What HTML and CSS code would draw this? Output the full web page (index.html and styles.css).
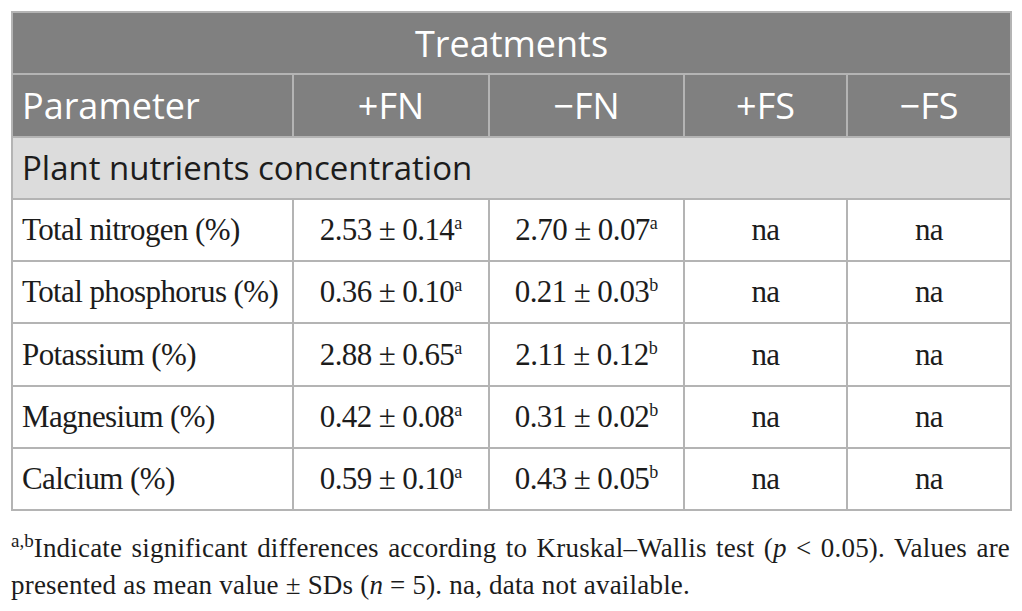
FILE: index.html
```html
<!DOCTYPE html>
<html>
<head>
<meta charset="utf-8">
<link rel="stylesheet" href="styles.css">
</head>
<body>
<div class="page">
<table class="data">
  <colgroup>
    <col class="c1"><col class="c2"><col class="c3"><col class="c4"><col class="c5">
  </colgroup>
  <thead>
    <tr class="h1"><th colspan="5">Treatments</th></tr>
    <tr class="h2"><th class="left">Parameter</th><th>+FN</th><th>&minus;FN</th><th>+FS</th><th>&minus;FS</th></tr>
  </thead>
  <tbody>
    <tr class="section"><td colspan="5">Plant nutrients concentration</td></tr>
    <tr><td class="left">Total nitrogen (%)</td><td>2.53 &plusmn; 0.14<sup>a</sup></td><td>2.70 &plusmn; 0.07<sup>a</sup></td><td>na</td><td>na</td></tr>
    <tr><td class="left">Total phosphorus (%)</td><td>0.36 &plusmn; 0.10<sup>a</sup></td><td>0.21 &plusmn; 0.03<sup>b</sup></td><td>na</td><td>na</td></tr>
    <tr><td class="left">Potassium (%)</td><td>2.88 &plusmn; 0.65<sup>a</sup></td><td>2.11 &plusmn; 0.12<sup>b</sup></td><td>na</td><td>na</td></tr>
    <tr><td class="left">Magnesium (%)</td><td>0.42 &plusmn; 0.08<sup>a</sup></td><td>0.31 &plusmn; 0.02<sup>b</sup></td><td>na</td><td>na</td></tr>
    <tr><td class="left">Calcium (%)</td><td>0.59 &plusmn; 0.10<sup>a</sup></td><td>0.43 &plusmn; 0.05<sup>b</sup></td><td>na</td><td>na</td></tr>
  </tbody>
</table>
<p class="note"><span class="note-line"><sup>a,b</sup>Indicate significant differences according to Kruskal&ndash;Wallis test (<i>p</i> &lt; 0.05). Values are</span> <span>presented as mean value &plusmn; SDs (<i>n</i> = 5). na, data not available.</span></p>
</div>
</body>
</html>
```

FILE: styles.css
```css
html, body {
  margin: 0;
  padding: 0;
  background: #ffffff;
}
.page {
  padding: 11px 12px 0 11px;
}
.data {
  width: 999px;
  border-collapse: collapse;
  table-layout: fixed;
  border: 2px solid #a4a4a4;
}
.c1 { width: 281px; }
.c2 { width: 196px; }
.c3 { width: 195px; }
.c4 { width: 163px; }
.c5 { width: 164px; }
.data th, .data td {
  border: 2px solid #b4b4b4;
  text-align: center;
  padding: 0 9px;
}
.data th {
  background: #808080;
  color: #ffffff;
  font-family: "Open Sans", "Lato", sans-serif;
  font-weight: 400;
  font-size: 36px;
  height: 60.3px;
}
.data th.left, .data td.left {
  text-align: left;
}
.section td {
  background: #dcdcdc;
  font-family: "Open Sans", "Lato", sans-serif;
  font-size: 33px;
  color: #1c1c1c;
  text-align: left;
  height: 60.3px;
}
.data tbody tr:not(.section) td {
  font-family: "Liberation Serif", serif;
  font-size: 31px;
  letter-spacing: -0.6px;
  color: #1c1c1c;
  height: 60.3px;
}
.data sup {
  font-size: 18px;
  line-height: 0;
  vertical-align: 11px;
  letter-spacing: 0;
}
.note {
  margin: 19px 0 0 0;
  font-family: "Liberation Serif", serif;
  font-size: 27px;
  letter-spacing: 0.2px;
  line-height: 37px;
  color: #1c1c1c;
  width: 999px;
}
.note-line {
  display: block;
  text-align: justify;
  text-align-last: justify;
}
.note sup {
  font-size: 19px;
  line-height: 0;
  vertical-align: 10px;
  letter-spacing: 0;
}
```
